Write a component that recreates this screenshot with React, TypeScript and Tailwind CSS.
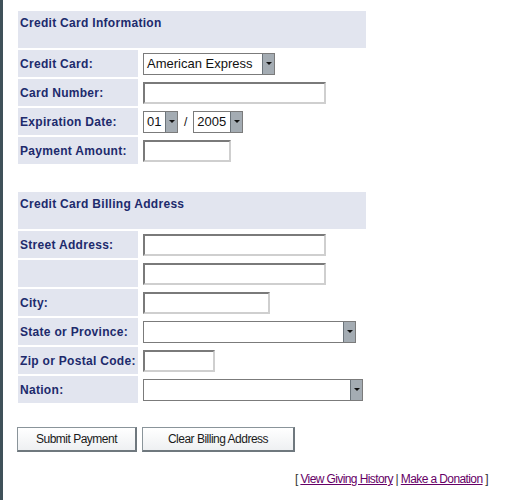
const labelCls =
  "flex items-center bg-[#e2e5ef] pl-[2px] text-[12px] font-bold tracking-[0.3px] text-[#202a6c]";

function Select({ width, value }: { width: number; value?: string }) {
  return (
    <div
      className="flex h-[22px] border border-[#7b7b7b] bg-white"
      style={{ width }}
    >
      <span className="flex-1 overflow-hidden whitespace-nowrap pl-[3px] text-[13px] leading-[20px] text-[#111]">
        {value}
      </span>
      <span className="flex w-[12px] items-center justify-center border-l border-[#6b747b] bg-[#a4acb3]">
        <svg width="6" height="4" viewBox="0 0 6 4">
          <path d="M0 0h6L3 3z" fill="#111" />
        </svg>
      </span>
    </div>
  );
}

function Input({ width }: { width: number }) {
  return (
    <div
      className="h-[22px] border-2 border-t-[#7a7a7a] border-l-[#7a7a7a] border-b-[#cfcfcf] border-r-[#cfcfcf] bg-white"
      style={{ width }}
    />
  );
}

function Row({ label, children }: { label: string; children: React.ReactNode }) {
  return (
    <>
      <div className={labelCls}>{label}</div>
      <div className="flex items-center pl-[3px]">{children}</div>
    </>
  );
}

function Header({ title }: { title: string }) {
  return (
    <div className="col-span-2 bg-[#e2e5ef] pl-[2px] pt-[5px] text-[12px] font-bold leading-[14px] tracking-[0.3px] text-[#202a6c]">
      {title}
    </div>
  );
}

export default function App() {
  return (
    <div className="flex min-h-[500px] bg-white font-['Liberation_Sans',Arial,sans-serif]">
      <div className="w-[3px] shrink-0 bg-[#3f5159]" />
      <div className="flex-1 pl-[15px] pt-[11px]">
        <div className="grid w-[348px] grid-cols-[120px_226px] grid-rows-[37px] auto-rows-[27px] gap-[2px]">
          <Header title="Credit Card Information" />
          <Row label="Credit Card:">
            <Select width={132} value="American Express" />
          </Row>
          <Row label="Card Number:">
            <Input width={183} />
          </Row>
          <Row label="Expiration Date:">
            <Select width={35} value="01" />
            <span className="mx-[6px] text-[12px] text-[#111]">/</span>
            <Select width={50} value="2005" />
          </Row>
          <Row label="Payment Amount:">
            <Input width={88} />
          </Row>
        </div>

        <div className="mt-[28px] grid w-[348px] grid-cols-[120px_226px] grid-rows-[37px] auto-rows-[27px] gap-[2px]">
          <Header title="Credit Card Billing Address" />
          <Row label="Street Address:">
            <Input width={183} />
          </Row>
          <Row label="">
            <Input width={183} />
          </Row>
          <Row label="City:">
            <Input width={127} />
          </Row>
          <Row label="State or Province:">
            <Select width={213} />
          </Row>
          <Row label="Zip or Postal Code:">
            <Input width={72} />
          </Row>
          <Row label="Nation:">
            <Select width={220} />
          </Row>
        </div>

        <div className="mt-[24px] flex gap-[5px] -ml-[1px]">
          <button className="h-[25px] w-[120px] border border-[#8a949a] border-b-2 border-r-2 border-b-[#6f787e] border-r-[#6f787e] bg-gradient-to-b from-white to-[#eef0f2] text-[12px] tracking-[-0.5px] text-[#1a1a1a]">
            Submit Payment
          </button>
          <button className="h-[25px] w-[153px] border border-[#8a949a] border-b-2 border-r-2 border-b-[#6f787e] border-r-[#6f787e] bg-gradient-to-b from-white to-[#eef0f2] text-[12px] tracking-[-0.5px] text-[#1a1a1a]">
            Clear Billing Address
          </button>
        </div>

        <div className="mt-[20px] pr-[34px] text-right text-[12px] leading-[14px] tracking-[-0.6px] text-[#333]">
          [ <a href="#" className="text-[#660066] underline">View Giving History</a> |{" "}
          <a href="#" className="text-[#660066] underline">Make a Donation</a> ]
        </div>
      </div>
    </div>
  );
}
